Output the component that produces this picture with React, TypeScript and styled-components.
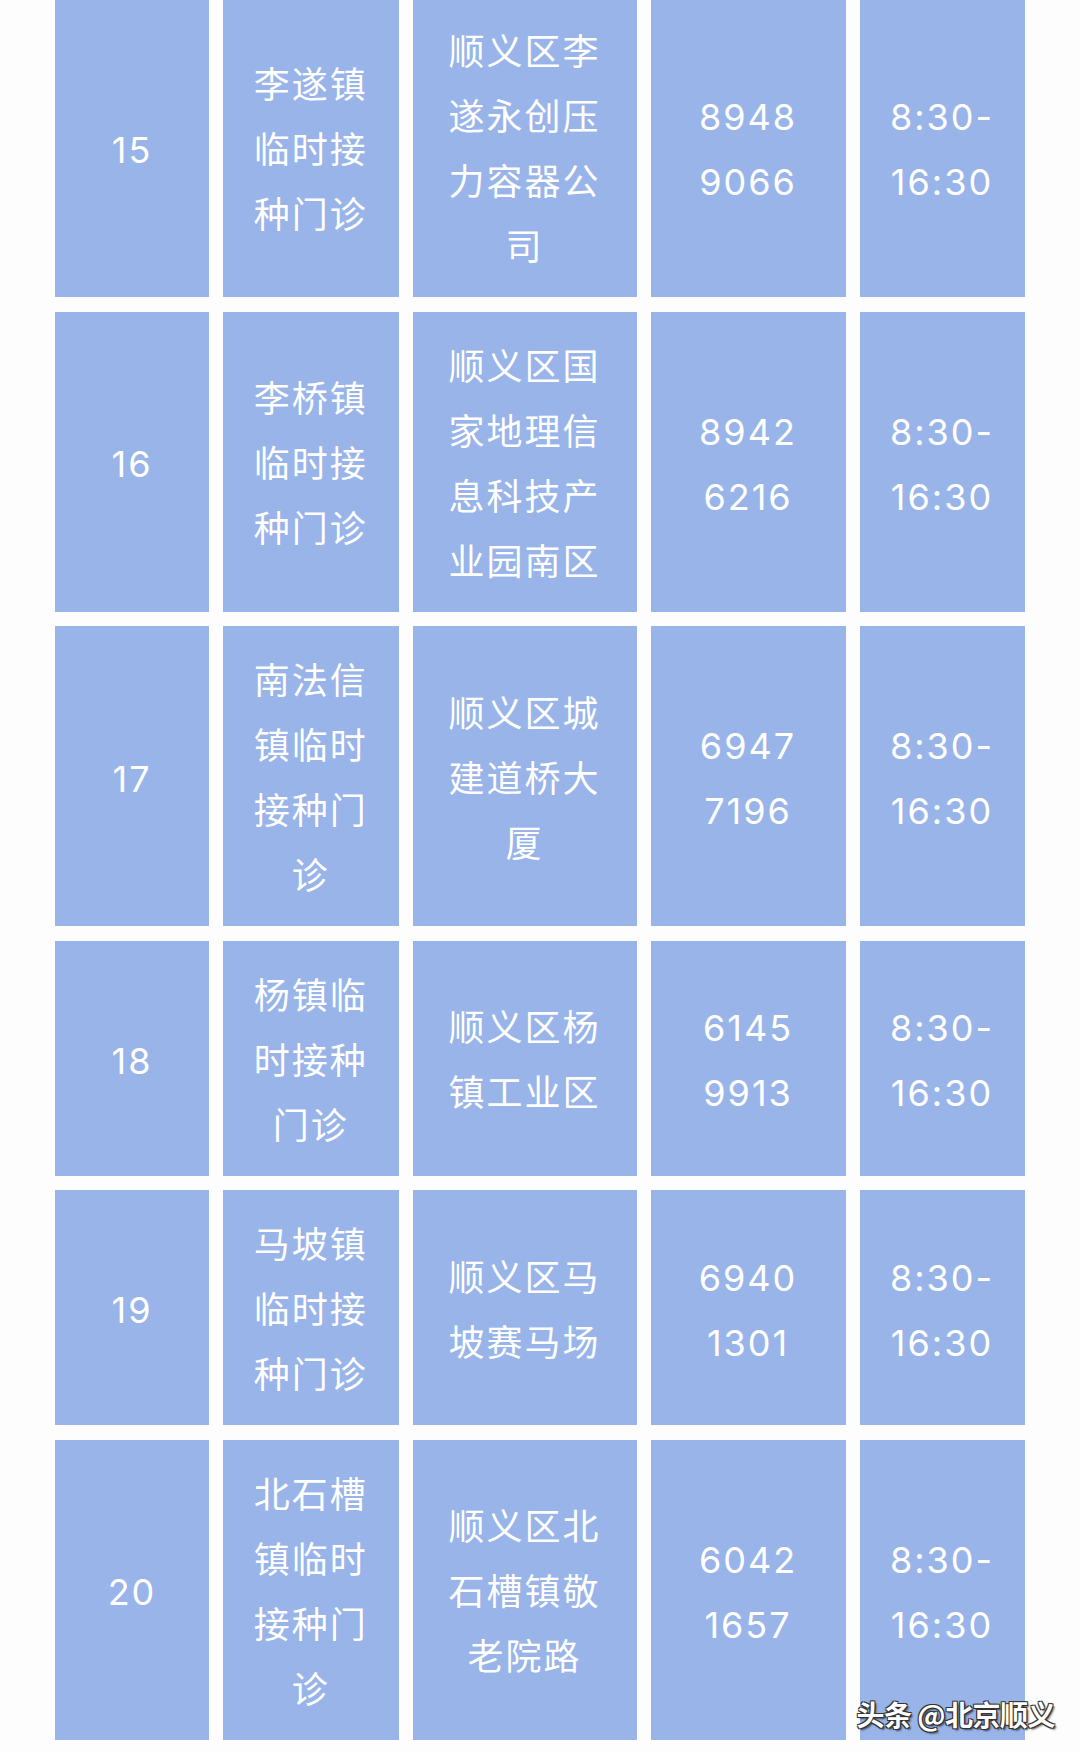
import { FC, Fragment, ReactElement } from 'react';
import styled, { createGlobalStyle } from 'styled-components';

type Row = {
  no: string;
  name: string;
  addr: string;
  tel: string;
  time: string;
};

const rows: Row[] = [
  { no: '15', name: '李遂镇临时接种门诊', addr: '顺义区李遂永创压力容器公司', tel: '8948 9066', time: '8:30-16:30' },
  { no: '16', name: '李桥镇临时接种门诊', addr: '顺义区国家地理信息科技产业园南区', tel: '8942 6216', time: '8:30-16:30' },
  { no: '17', name: '南法信镇临时接种门诊', addr: '顺义区城建道桥大厦', tel: '6947 7196', time: '8:30-16:30' },
  { no: '18', name: '杨镇临时接种门诊', addr: '顺义区杨镇工业区', tel: '6145 9913', time: '8:30-16:30' },
  { no: '19', name: '马坡镇临时接种门诊', addr: '顺义区马坡赛马场', tel: '6940 1301', time: '8:30-16:30' },
  { no: '20', name: '北石槽镇临时接种门诊', addr: '顺义区北石槽镇敬老院路', tel: '6042 1657', time: '8:30-16:30' },
];

const App: FC = (): ReactElement => {
  return (
    <>
      <GlobalStyle />
      <Page>
        <Table>
          {rows.map((row) => (
            <Fragment key={row.no}>
              <Cell>{row.no}</Cell>
              <Cell>{row.name}</Cell>
              <Cell>{row.addr}</Cell>
              <Cell>{row.tel}</Cell>
              <Cell>{row.time}</Cell>
            </Fragment>
          ))}
        </Table>
        <Watermark>头条 @北京顺义</Watermark>
      </Page>
    </>
  );
};

const GlobalStyle = createGlobalStyle`
  html, body {
    margin: 0;
    padding: 0;
    background: #fdfdfd;
  }
`;

const Page = styled.div`
  position: relative;
  width: 1080px;
  height: 1752px;
  overflow: hidden;
  background: #fdfdfd;
`;

const Table = styled.div`
  display: grid;
  grid-template-columns: 154px 175.5px 224px 195px 165px;
  column-gap: 14px;
  row-gap: 14.5px;
  margin-top: -3px;
  padding-left: 55px;
`;

const Cell = styled.div`
  display: flex;
  align-items: center;
  justify-content: center;
  box-sizing: border-box;
  padding: 23px 24px 17px;
  background: #98b4e9;
  color: #fff;
  font-family: Inter, 'Noto Sans CJK SC', sans-serif;
  font-size: 36px;
  letter-spacing: 2px;
  line-height: 65px;
  text-align: center;
`;

const Watermark = styled.div`
  position: absolute;
  right: 25px;
  bottom: 20px;
  color: #fff;
  font-family: 'Noto Sans CJK SC', sans-serif;
  font-size: 28px;
  font-weight: 700;
  line-height: 36px;
  letter-spacing: -0.5px;
  text-shadow: 1px 1px 0 #333, -1px -1px 0 #333, 1px -1px 0 #333, -1px 1px 0 #333, 2px 2px 2px rgba(0, 0, 0, 0.6);
`;

export default App;
